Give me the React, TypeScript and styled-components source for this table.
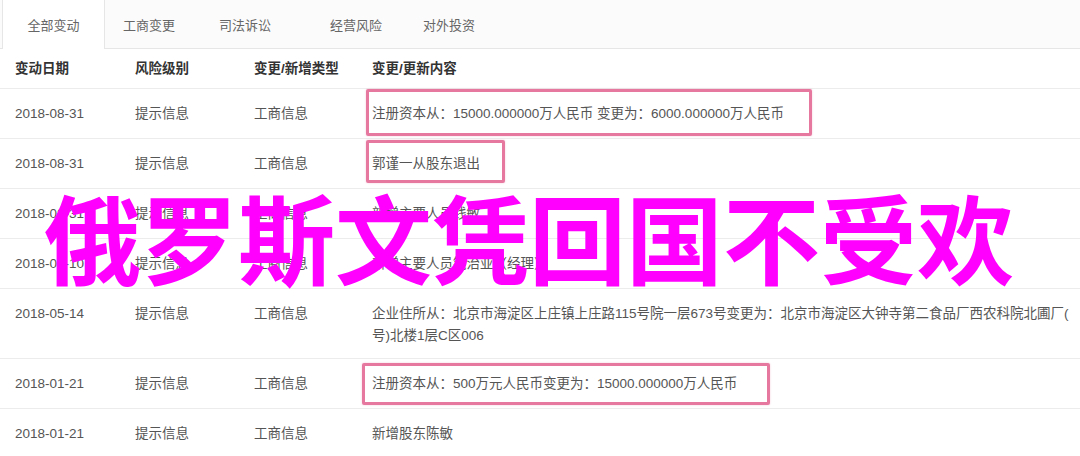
import React from "react";
import styled, { createGlobalStyle } from "styled-components";

const Global = createGlobalStyle`
  html, body { margin: 0; padding: 0; background: #ffffff; overflow: hidden; }
  body { font-family: "Liberation Sans", "Noto Sans CJK SC", sans-serif; }
`;

const Page = styled.div`
  position: relative;
  width: 1080px;
  height: 456px;
  overflow: hidden;
  background: #fefefe;
`;

const TabBar = styled.div`
  display: flex;
  height: 48px;
  padding-left: 2px;
  background: #fbfbfb;
  border-bottom: 1px solid #e6e6e6;
`;

const Tab = styled.div<{ $w: number; $active?: boolean }>`
  width: ${(p) => p.$w}px;
  display: flex;
  align-items: center;
  justify-content: center;
  font-size: 13px;
  color: #666;
  box-sizing: border-box;
  ${(p) =>
    p.$active
      ? `background:#fff;border-left:1px solid #e6e6e6;border-right:1px solid #e6e6e6;margin-bottom:-1px;height:49px;`
      : ``}
`;

const Row = styled.div<{ $head?: boolean; $tall?: boolean }>`
  display: grid;
  grid-template-columns: 120px 119px 118px 1fr;
  padding: ${(p) => (p.$head ? "9px 0 8px 15px" : p.$tall ? "14px 0 11px 15px" : "14px 0 13px 15px")};
  line-height: 22px;
  font-size: 13.5px;
  color: ${(p) => (p.$head ? "#333" : "#555")};
  font-weight: ${(p) => (p.$head ? 700 : 400)};
  border-bottom: 1px solid #ececec;
  background: #fff;
`;

const Cell = styled.div`
  position: relative;
  white-space: nowrap;
`;

const Mark = styled.div<{ $l: number; $t: number; $w: number; $h: number }>`
  position: absolute;
  left: ${(p) => p.$l}px;
  top: ${(p) => p.$t}px;
  width: ${(p) => p.$w}px;
  height: ${(p) => p.$h}px;
  box-sizing: border-box;
  border: 3px solid #e6779f;
  border-radius: 2px;
  box-shadow: 0 0 2px rgba(230, 119, 159, 0.4);
  pointer-events: none;
`;

const Overlay = styled.div`
  position: absolute;
  left: 44px;
  top: 186px;
  font-family: "Noto Sans CJK SC", sans-serif;
  font-weight: 700;
  font-size: 97px;
  line-height: 1;
  color: #ff00ff;
  white-space: nowrap;
`;

type R = { date: string; lines: string[]; mark?: [number, number, number, number] };

const rows: R[] = [
  { date: "2018-08-31", lines: ["注册资本从：15000.000000万人民币 变更为：6000.000000万人民币"], mark: [-6, -14, 446, 47] },
  { date: "2018-08-31", lines: ["郭谨一从股东退出"], mark: [-6, -13, 139, 43] },
  { date: "2018-08-31", lines: ["新增主要人员钱敏"] },
  { date: "2018-04-10", lines: ["新增主要人员钱治亚（经理）"] },
  {
    date: "2018-05-14",
    lines: [
      "企业住所从：北京市海淀区上庄镇上庄路115号院一层673号变更为：北京市海淀区大钟寺第二食品厂西农科院北圃厂(",
      "号)北楼1层C区006",
    ],
  },
  { date: "2018-01-21", lines: ["注册资本从：500万元人民币变更为：15000.000000万人民币"], mark: [-10, -10, 408, 42] },
  { date: "2018-01-21", lines: ["新增股东陈敏"] },
];

const Line = styled.div``;

export default function App() {
  return (
    <>
      <Global />
      <Page>
        <TabBar>
          <Tab $w={103} $active>全部变动</Tab>
          <Tab $w={88}>工商变更</Tab>
          <Tab $w={104}>司法诉讼</Tab>
          <Tab $w={118}>经营风险</Tab>
          <Tab $w={68}>对外投资</Tab>
        </TabBar>
        <Row $head>
          <Cell>变动日期</Cell>
          <Cell>风险级别</Cell>
          <Cell>变更/新增类型</Cell>
          <Cell>变更/更新内容</Cell>
        </Row>
        {rows.map((r, i) => (
          <Row key={i} $tall={r.lines.length > 1}>
            <Cell>{r.date}</Cell>
            <Cell>提示信息</Cell>
            <Cell>工商信息</Cell>
            <Cell>
              {r.lines.map((l, j) => (
                <Line key={j}>{l}</Line>
              ))}
              {r.mark && <Mark $l={r.mark[0]} $t={r.mark[1]} $w={r.mark[2]} $h={r.mark[3]} />}
            </Cell>
          </Row>
        ))}
        <Overlay>俄罗斯文凭回国不受欢</Overlay>
      </Page>
    </>
  );
}
